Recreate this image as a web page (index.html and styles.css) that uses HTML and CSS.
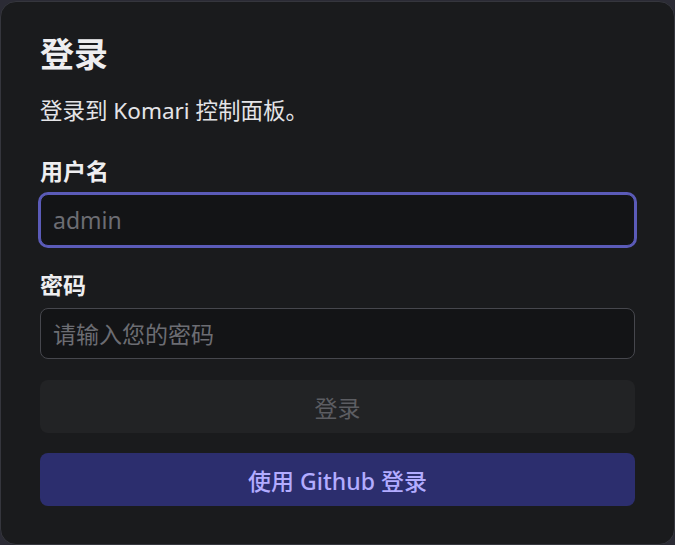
FILE: index.html
```html
<!DOCTYPE html>
<html lang="zh-CN">
<head>
<meta charset="utf-8">
<title>登录</title>
<link rel="stylesheet" href="styles.css">
</head>
<body>
<div class="card">
  <h1 class="title">登录</h1>
  <p class="subtitle">登录到 Komari 控制面板。</p>
  <label class="label" for="u">用户名</label>
  <input id="u" class="input input-focus" type="text" placeholder="admin">
  <label class="label label-pw" for="p">密码</label>
  <input id="p" class="input" type="password" placeholder="请输入您的密码">
  <button class="btn btn-disabled" disabled>登录</button>
  <button class="btn btn-github">使用 Github 登录</button>
</div>
</body>
</html>
```
FILE: styles.css
```css
html, body {
  margin: 0;
  padding: 0;
  background: #2b2b35;
  width: 675px;
  height: 545px;
  overflow: hidden;
}
body {
  font-family: "Noto Sans", "Noto Sans CJK SC", sans-serif;
  padding-top: 1px;
  box-sizing: border-box;
}
.card {
  box-sizing: border-box;
  width: 675px;
  height: 544px;
  background: #1a1b1d;
  border: 1px solid #35363d;
  border-radius: 16px;
  padding: 30px 39px 0 39px;
  display: flex;
  flex-direction: column;
}
.title {
  margin: 0;
  font-size: 34px;
  line-height: 44px;
  font-weight: 700;
  color: #eeeef0;
}
.subtitle {
  margin: 19px 0 0 0;
  font-size: 22.5px;
  line-height: 32px;
  color: #e4e4e7;
}
.label {
  margin-top: 29px;
  font-size: 23px;
  line-height: 30px;
  font-weight: 700;
  color: #eeeef0;
}
.label-pw {
  margin-top: 24px;
}
.input {
  box-sizing: border-box;
  margin-top: 8px;
  height: 51px;
  width: 100%;
  background: #131416;
  border: 1px solid #46474d;
  border-radius: 8px;
  padding: 0 12px;
  font-family: "Noto Sans", "Noto Sans CJK SC", sans-serif;
  font-size: 23px;
  color: #e4e4e7;
  outline: none;
}
.input::placeholder {
  color: #6c6d73;
}
.input-focus {
  height: 52px;
  border-color: #5b5bb8;
  box-shadow: 0 0 0 2px #5b5bb8;
}
.btn {
  box-sizing: border-box;
  width: 100%;
  height: 53px;
  border: none;
  border-radius: 8px;
  font-family: "Noto Sans", "Noto Sans CJK SC", sans-serif;
  font-size: 23px;
}
.btn-disabled {
  margin-top: 21px;
  background: #222325;
  color: #5c5d62;
}
.btn-github {
  margin-top: 20px;
  background: #2c2e6e;
  color: #b3acff;
  font-weight: 500;
}
```
